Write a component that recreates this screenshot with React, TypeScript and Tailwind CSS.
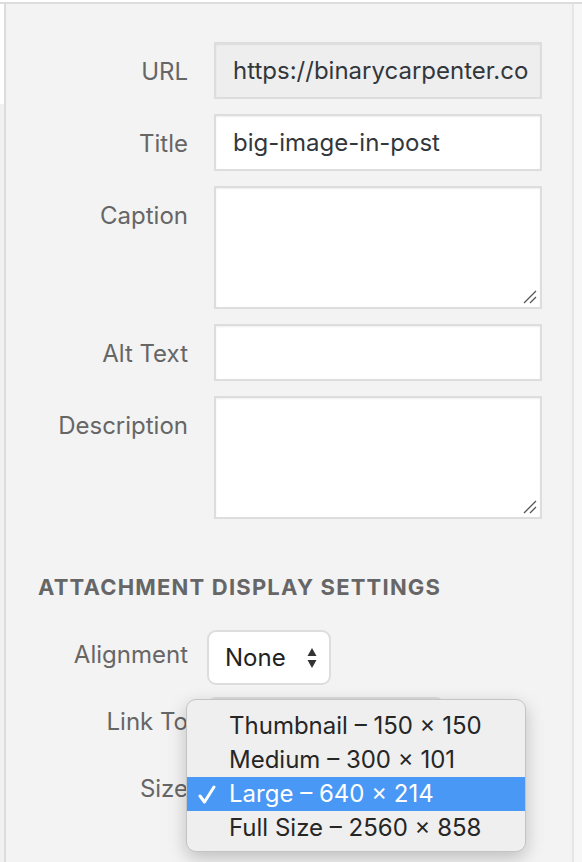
import React from "react";

const FONT = { fontFamily: "Inter, 'Noto Sans', sans-serif" };

function Resize() {
  return (
    <svg className="absolute right-[3px] bottom-[3px]" width="14" height="14" viewBox="0 0 14 14">
      <line x1="1" y1="13" x2="13" y2="1" stroke="#555" strokeWidth="1.3" />
      <line x1="7" y1="13" x2="13" y2="7" stroke="#555" strokeWidth="1.3" />
    </svg>
  );
}

function Row({ label, children }: { label: string; children: React.ReactNode }) {
  return (
    <div className="flex items-start">
      <div className="w-[182px] h-[57px] flex items-center justify-end pt-[3px] text-[24px] text-[#666666]">{label}</div>
      <div className="ml-[26px]">{children}</div>
    </div>
  );
}

function Input({ value, readOnly, tall }: { value?: string; readOnly?: boolean; tall?: boolean }) {
  return (
    <div
      className={
        "relative w-[328px] border-2 border-[#dddddd] shadow-[inset_0_1px_2px_rgba(0,0,0,0.07)] flex items-center pl-[17px] text-[24px] text-[#32373c] overflow-hidden whitespace-nowrap " +
        (readOnly ? "bg-[#eeeeee] " : "bg-white ") +
        (tall ? "h-[123px] items-start" : "h-[57px]")
      }
    >
      {value}
      {tall && <Resize />}
    </div>
  );
}

function SelectRow({ label, width, value, arrows }: { label: string; width: number; value?: string; arrows?: boolean }) {
  return (
    <div className="flex items-center">
      <div className="w-[182px] text-right text-[24px] text-[#666666] mb-[5px]">{label}</div>
      <div
        className="ml-[19px] h-[55px] bg-white border-2 border-[#dddddd] rounded-[9px] flex items-center pl-[16px] pr-[12px] text-[24px] text-[#222222] justify-between"
        style={{ width }}
      >
        <span>{value}</span>
        {arrows && (
          <svg width="10" height="24" viewBox="0 0 10 24">
            <polygon points="5,2 9.5,10 0.5,10" fill="#333" />
            <polygon points="5,22 9.5,14 0.5,14" fill="#333" />
          </svg>
        )}
      </div>
    </div>
  );
}

export default function App() {
  const items = [
    { t: "Thumbnail – 150 × 150" },
    { t: "Medium – 300 × 101" },
    { t: "Large – 640 × 214", sel: true },
    { t: "Full Size – 2560 × 858" },
  ];
  return (
    <div className="w-[582px] h-[862px] bg-white flex flex-col overflow-hidden relative" style={FONT}>
      <div className="h-[2px] bg-white" />
      <div className="h-[2px] bg-[#dcdcdc]" />
      <div className="flex flex-1">
        <div className="w-[4px] flex flex-col">
          <div className="h-[100px] bg-white" />
          <div className="flex-1 bg-[#f1f1f1]" />
        </div>
        <div className="w-[2px] bg-[#dcdcdc]" />
        <main className="w-[566px] bg-[#f3f3f3] pt-[38px] flex flex-col">
          <div className="flex flex-col gap-[15px]">
            <Row label="URL">
              <Input value="https://binarycarpenter.co" readOnly />
            </Row>
            <Row label="Title">
              <Input value="big-image-in-post" />
            </Row>
            <Row label="Caption">
              <Input tall />
            </Row>
            <Row label="Alt Text">
              <Input />
            </Row>
            <Row label="Description">
              <Input tall />
            </Row>
          </div>
          <h2 className="mt-[53px] pl-[32px] h-[30px] leading-[30px] text-[22px] font-bold text-[#666666] tracking-[1.2px]">
            ATTACHMENT DISPLAY SETTINGS
          </h2>
          <div className="mt-[28px] flex flex-col gap-[12px]">
            <SelectRow label="Alignment" width={124} value="None" arrows />
            <SelectRow label="Link To" width={238} value="" />
            <SelectRow label="Size" width={238} value="" />
          </div>
        </main>
        <div className="w-[2px] bg-[#e6e6e6]" />
        <div className="w-[8px] bg-[#f7f7f7]" />
      </div>

      <div className="absolute left-[186px] top-[699px] w-[340px] h-[153px] rounded-[10px] border border-[#c4c4c4] bg-[#efefef] shadow-[0_6px_18px_rgba(0,0,0,0.22)] pt-[9px]">
        {items.map((it) => (
          <div
            key={it.t}
            className={
              "relative h-[34px] flex items-center pl-[42px] text-[24px] " +
              (it.sel ? "bg-[#4a98f5] text-white" : "text-[#262626]")
            }
          >
            {it.sel && (
              <svg className="absolute left-[11px] top-[8px]" width="18" height="19" viewBox="0 0 18 19">
                <path d="M2 11 L6.5 17 L16 2" stroke="white" strokeWidth="3" fill="none" strokeLinecap="round" strokeLinejoin="round" />
              </svg>
            )}
            {it.t}
          </div>
        ))}
      </div>
    </div>
  );
}
